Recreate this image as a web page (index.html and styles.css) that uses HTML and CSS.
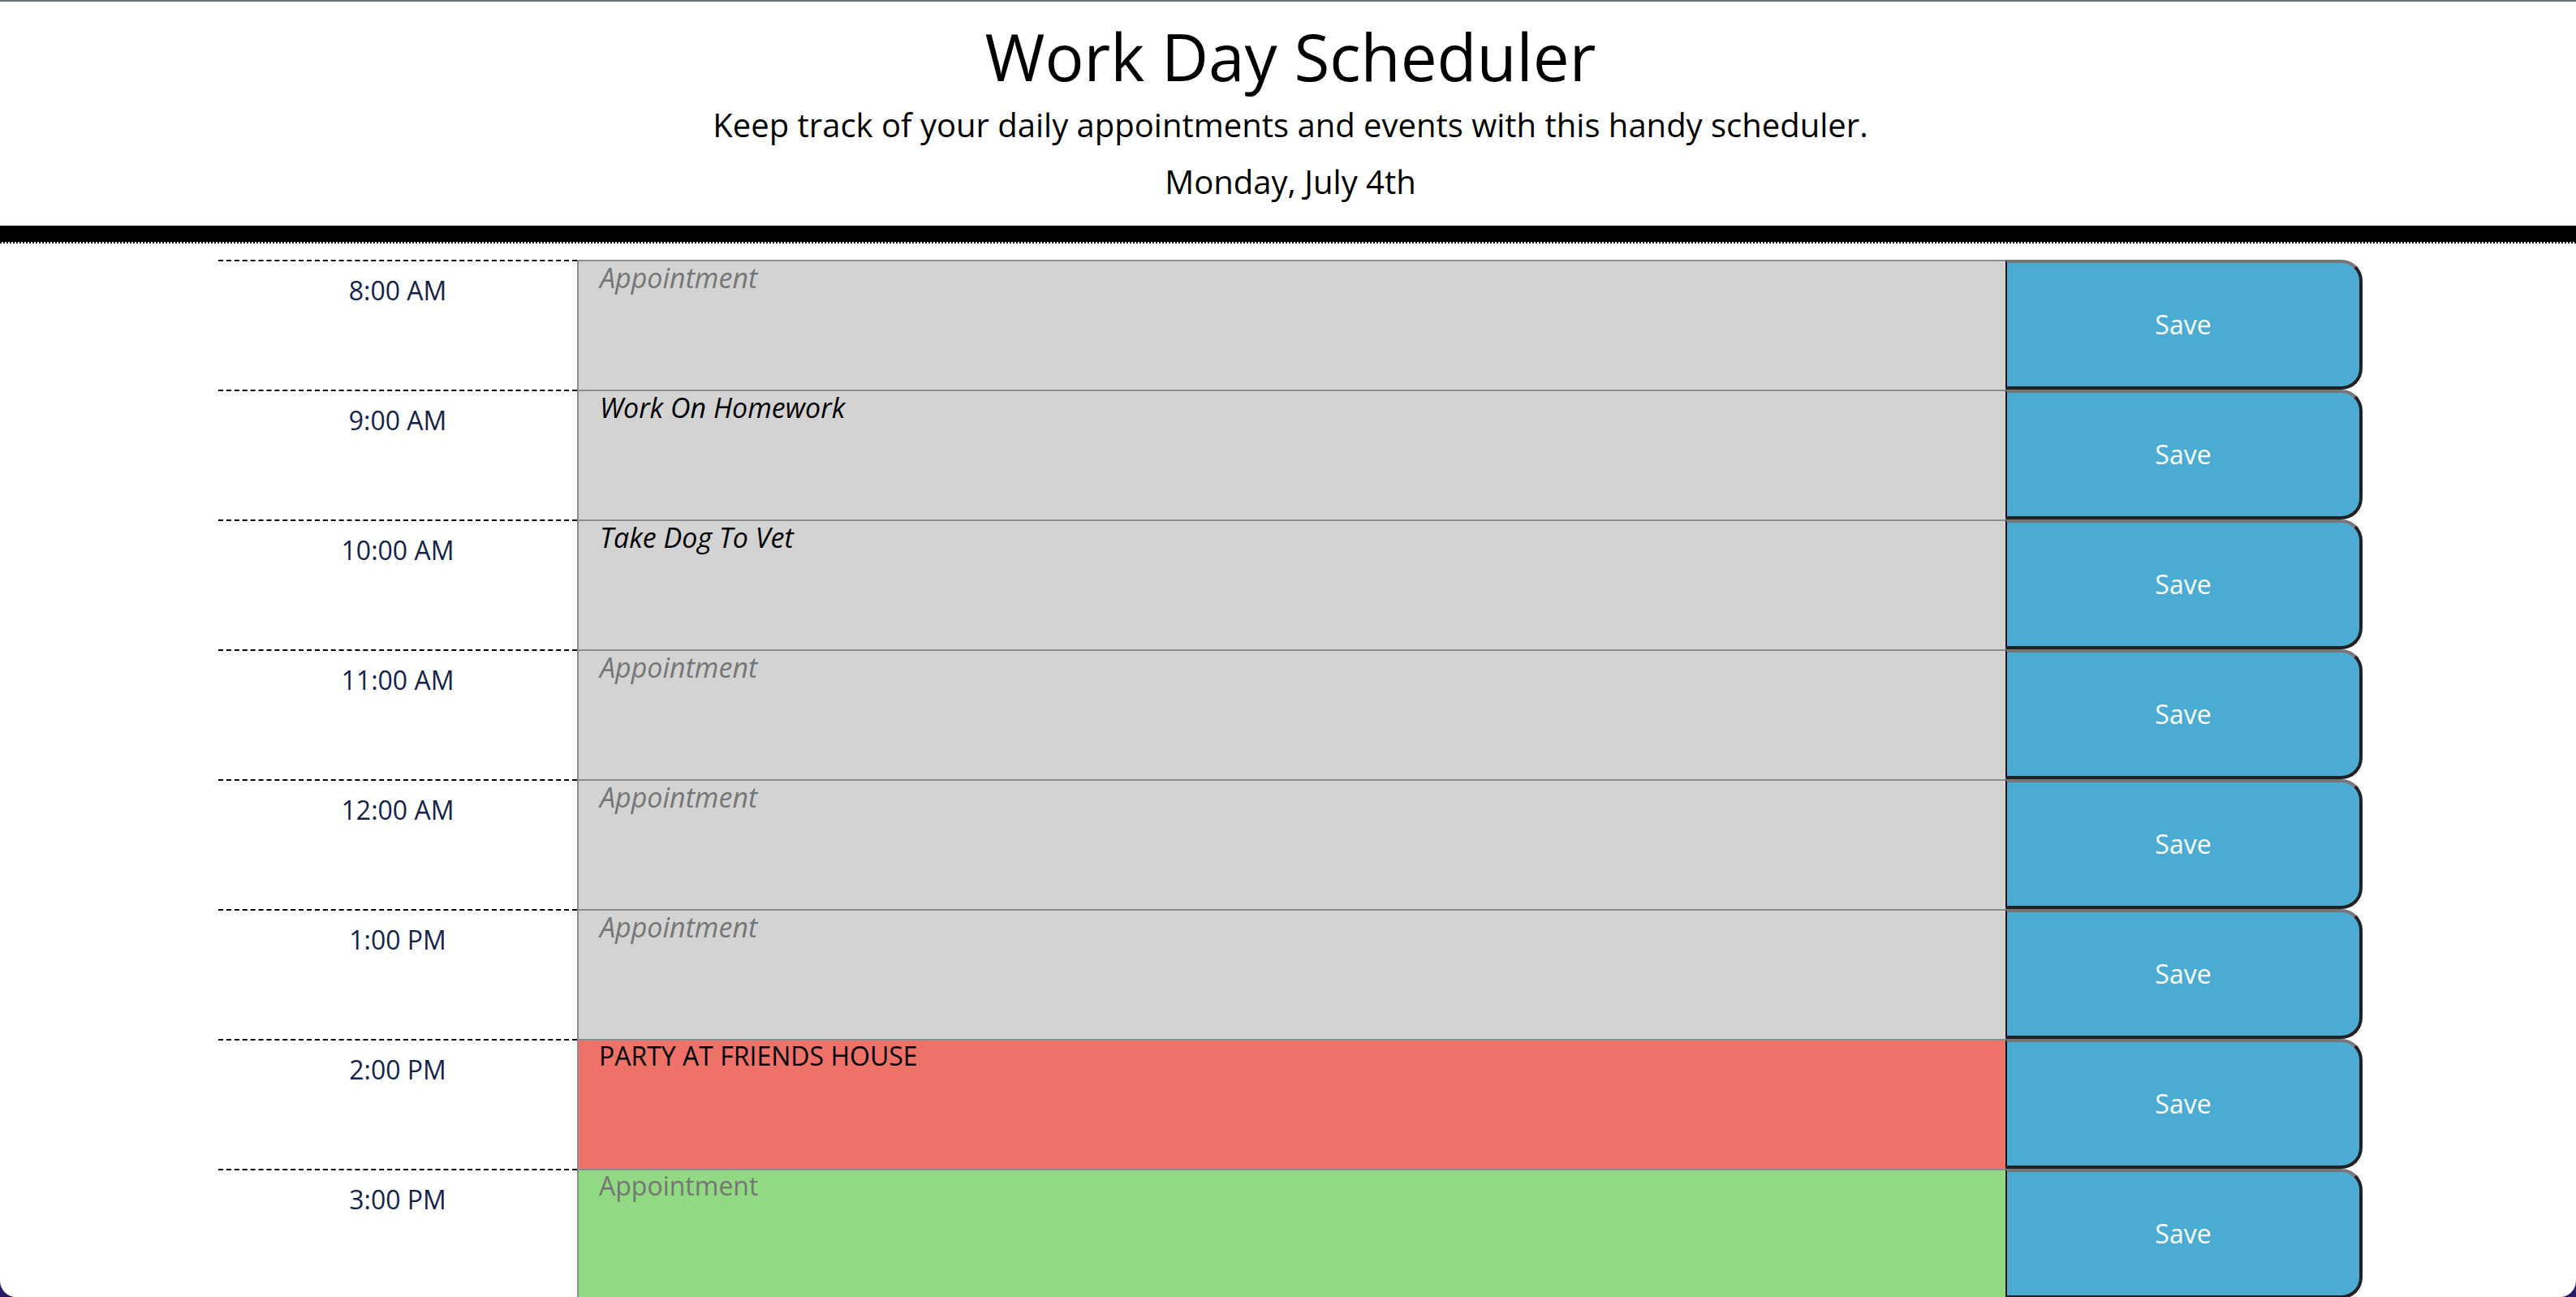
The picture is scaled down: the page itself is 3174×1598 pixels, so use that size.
FILE: index.html
```html
<!DOCTYPE html>
<html lang="en">
<head>
<meta charset="utf-8">
<title>Work Day Scheduler</title>
<link rel="stylesheet" href="styles.css">
</head>
<body>
<header class="jumbotron">
  <h1 class="title">Work Day Scheduler</h1>
  <p class="lead">Keep track of your daily appointments and events with this handy scheduler.</p>
  <p class="lead date">Monday, July 4th</p>
</header>
<main class="planner">
  <div class="container">
    <div class="time-block">
      <div class="hour">8:00 AM</div>
      <textarea class="description past" placeholder="Appointment"></textarea>
      <button class="save-btn">Save</button>
    </div>
    <div class="time-block">
      <div class="hour">9:00 AM</div>
      <textarea class="description past" placeholder="Appointment">Work On Homework</textarea>
      <button class="save-btn">Save</button>
    </div>
    <div class="time-block">
      <div class="hour">10:00 AM</div>
      <textarea class="description past" placeholder="Appointment">Take Dog To Vet</textarea>
      <button class="save-btn">Save</button>
    </div>
    <div class="time-block">
      <div class="hour">11:00 AM</div>
      <textarea class="description past" placeholder="Appointment"></textarea>
      <button class="save-btn">Save</button>
    </div>
    <div class="time-block">
      <div class="hour">12:00 AM</div>
      <textarea class="description past" placeholder="Appointment"></textarea>
      <button class="save-btn">Save</button>
    </div>
    <div class="time-block">
      <div class="hour">1:00 PM</div>
      <textarea class="description past" placeholder="Appointment"></textarea>
      <button class="save-btn">Save</button>
    </div>
    <div class="time-block">
      <div class="hour">2:00 PM</div>
      <textarea class="description present" placeholder="Appointment">PARTY AT FRIENDS HOUSE</textarea>
      <button class="save-btn">Save</button>
    </div>
    <div class="time-block">
      <div class="hour">3:00 PM</div>
      <textarea class="description future" placeholder="Appointment"></textarea>
      <button class="save-btn">Save</button>
    </div>
  </div>
</main>
</body>
</html>
```
FILE: styles.css
```css
html {
  height: 100%;
  overflow: hidden;
  background: #2a1a6a;
}
body {
  margin: 0;
  height: 100%;
  overflow: hidden;
  background: #ffffff;
  border-radius: 0 0 20px 20px;
  font-family: "Open Sans", "Noto Sans", sans-serif;
  color: #000;
}
.jumbotron {
  border-top: 2px solid #6c757d;
  border-bottom: 20px solid #000;
  padding: 19px 0 30px 6px;
  text-align: center;
}
.title {
  margin: 0 0 13px;
  font-size: 80px;
  line-height: 96px;
  font-weight: 400;
}
.lead {
  margin: 0 0 22px;
  font-size: 40px;
  line-height: 48px;
}
.lead.date {
  margin: 0;
}
.planner {
  border-top: 2px dotted #000;
  padding-top: 20px;
}
.container {
  width: 2642px;
  margin-left: 269px;
}
.time-block {
  display: grid;
  grid-template-columns: 442px 1760px 440px;
  height: 160px;
}
.hour {
  border-top: 2px dashed #000;
  padding-top: 12px;
  text-align: center;
  font-size: 32px;
  line-height: 48px;
  color: #14234a;
}
.description {
  box-sizing: border-box;
  width: 100%;
  height: 160px;
  margin: 0;
  border: none;
  border-top: 2px solid #8c8c8c;
  border-left: 2px solid #8c8c8c;
  padding: 3px 24px 2px 25px;
  font-family: "Open Sans", "Noto Sans", sans-serif;
  font-size: 32px;
  line-height: 32px;
  color: #000;
  resize: none;
  outline: none;
}
.description::placeholder {
  color: #767676;
}
.past {
  background: #d3d3d3;
  font-style: italic;
  font-size: 34px;
  padding-top: 4px;
  padding-left: 26px;
}
.present {
  background: #ee7268;
}
.future {
  background: #91da83;
}
.save-btn {
  box-sizing: border-box;
  height: 160px;
  margin: 0;
  background: #4cabd2;
  color: #fff;
  font-family: "Open Sans", "Noto Sans", sans-serif;
  font-size: 32px;
  border-top: 4px solid #767676;
  border-left: 2px solid #111;
  border-right: 4px solid #222;
  border-bottom: 4px solid #222;
  border-radius: 0 26px 26px 0;
  padding: 0 0 2px;
}
```
